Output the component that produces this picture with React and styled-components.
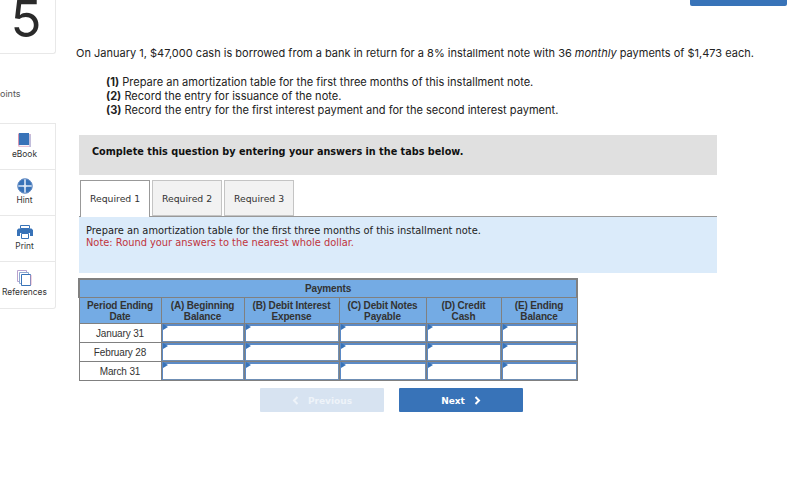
import styled, { createGlobalStyle } from 'styled-components';

const GlobalStyle = createGlobalStyle`
  html, body {
    margin: 0;
    padding: 0;
    background: #fff;
  }
`;

const Page = styled.div`
  display: flex;
  width: 802px;
  height: 500px;
  overflow: hidden;
  font-family: "Inter", sans-serif;
  color: #222;
`;

const Sidebar = styled.aside`
  width: 56px;
  flex: none;
`;

const NumberBox = styled.div`
  height: 54px;
  box-sizing: border-box;
  border-right: 1px solid #e8e8e8;
  border-bottom: 1px solid #e8e8e8;
  border-bottom-right-radius: 3px;
  display: flex;
  justify-content: center;
  padding-right: 3px;
  font-size: 51px;
  line-height: 38px;
  font-weight: 400;
  color: #2a2a2a;
`;

const Points = styled.div`
  margin-top: 33px;
  font-size: 9px;
  line-height: 14px;
  color: #555;
`;

const ToolCard = styled.div`
  margin-top: 22px;
  box-sizing: border-box;
  border: 1px solid #e8e8e8;
  border-left: 0;
  border-bottom-right-radius: 3px;
`;

const Tool = styled.div`
  height: 46px;
  box-sizing: border-box;
  border-bottom: ${(p) => (p.$last ? '0' : '1px solid #e8e8e8')};
  display: flex;
  flex-direction: column;
  align-items: center;
  padding: 8px 6px 0 0;
  gap: 1px;
  font-size: 8.4px;
  line-height: 11px;
  color: #333;
`;

const IconSlot = styled.div`
  height: 16px;
  display: flex;
  align-items: center;
`;

const Main = styled.main`
  flex: 1;
  padding-left: 20px;
  padding-right: 15px;
`;

const TopBar = styled.div`
  display: flex;
  justify-content: flex-end;
  height: 6px;
`;

const TopButton = styled.div`
  width: 97px;
  height: 6px;
  background: #3873b8;
  border-radius: 0 0 2px 2px;
`;

const Question = styled.p`
  margin: 40px 0 0;
  font-size: 11px;
  line-height: 15px;
  white-space: nowrap;
`;

const Steps = styled.ol`
  list-style: none;
  margin: 14px 0 0;
  padding: 0 0 0 30px;
  font-size: 11.05px;
  line-height: 14px;
`;

const Panels = styled.div`
  margin-left: 3px;
  width: 638px;
`;

const Banner = styled.div`
  margin-top: 18px;
  height: 40px;
  background: #e0e0e0;
  box-sizing: border-box;
  padding: 10px 13px;
  font-family: "DejaVu Sans", sans-serif;
  font-size: 9.7px;
  line-height: 13px;
  font-weight: 700;
  color: #111;
`;

const Tabs = styled.div`
  display: flex;
  gap: 2px;
  margin-top: 5px;
  padding-left: 1px;
  border-bottom: 1px solid #999;
`;

const Tab = styled.div`
  width: 70px;
  box-sizing: border-box;
  margin-bottom: ${(p) => (p.$active ? '-1px' : '0')};
  height: ${(p) => (p.$active ? '37px' : '36px')};
  border: 1px solid ${(p) => (p.$active ? '#999' : '#c4c4c4')};
  border-bottom: ${(p) => (p.$active ? '0' : '1px solid #c4c4c4')};
  padding-bottom: ${(p) => (p.$active ? '2px' : '0')};
  background: ${(p) => (p.$active ? '#fff' : '#f2f2f2')};
  display: flex;
  align-items: center;
  justify-content: center;
  font-family: "DejaVu Sans", sans-serif;
  font-size: 9.3px;
  color: #333;
`;

const Instructions = styled.div`
  height: 56px;
  box-sizing: border-box;
  background: #dbebfa;
  padding: 8px 7px;
  font-family: "DejaVu Sans", sans-serif;
  font-size: 9.85px;
  line-height: 12px;
  color: #222;
`;

const Note = styled.div`
  color: #c0343c;
`;

const Table = styled.table`
  margin: 5px 0 0 -1px;
  width: 498px;
  table-layout: fixed;
  border-collapse: collapse;
  font-family: "Liberation Sans", sans-serif;
  font-size: 10px;
  letter-spacing: -0.15px;
  line-height: 11px;
`;

const HeadCell = styled.th`
  background: #74abe4;
  border: 1px solid #808080;
  border-width: ${(p) => (p.$top ? '2px 2px 1px' : '1px')};
  height: ${(p) => (p.$top ? '16px' : '25px')};
  padding: ${(p) => (p.$top ? '0 0 1px' : '0')};
  font-weight: 700;
  color: #333;
`;

const DateCell = styled.td`
  border: 1px solid #808080;
  height: 18px;
  padding: 0;
  text-align: center;
  color: #333;
  background: #fff;
`;

const InputCell = styled.td`
  position: relative;
  border: 1px solid #808080;
  height: 18px;
  padding: 0;
  background: #fff;
  box-shadow: inset 1px 2px 0 #5b8ac6, inset -1px -1px 0 #6f8fb5;

  &::before {
    content: '';
    position: absolute;
    left: 1px;
    top: 0;
    border-top: 3px solid transparent;
    border-bottom: 3px solid transparent;
    border-left: 5px solid #3873b8;
  }
`;

const Pager = styled.div`
  display: flex;
  gap: 15px;
  margin-top: 7px;
  padding-left: 181px;
`;

const PagerButton = styled.div`
  width: 124px;
  height: 24px;
  box-sizing: border-box;
  padding-top: 1px;
  border-radius: 1px;
  background: ${(p) => (p.$disabled ? '#d7e3f1' : '#3873b8')};
  color: ${(p) => (p.$disabled ? '#eef3f9' : '#fff')};
  display: flex;
  align-items: center;
  justify-content: center;
  gap: 9px;
  font-family: "DejaVu Sans", sans-serif;
  font-size: 9px;
  font-weight: 700;
`;

const Chevron = ({ left }) => (
  <svg width="7" height="9" viewBox="0 0 7 9" fill="none" stroke="currentColor" strokeWidth="2">
    <path d={left ? 'M5.5 1L2 4.5 5.5 8' : 'M1.5 1L5 4.5 1.5 8'} />
  </svg>
);

const BookIcon = () => (
  <svg width="15" height="15" viewBox="0 0 15 15">
    <path d="M1 1.5C1 .8 1.6 0 2.5 0H3v12H2.5C1.6 12 1 12.6 1 13.5z" fill="#d795b0" />
    <path d="M2 0h10v12H2z" fill="#3873b8" />
    <path d="M12 1h2v13H3c-1 0-2-.4-2-1.2C1 12.2 2 12 3 12h9z" fill="#e6b6cb" />
    <path d="M2.5 12.7H12.5" stroke="#fff" strokeWidth="1" />
    <path d="M13 1.5V14" stroke="#9dc4ec" strokeWidth="1" />
  </svg>
);

const HintIcon = () => (
  <svg width="16" height="16" viewBox="0 0 16 16">
    <circle cx="8" cy="8" r="7.5" fill="#3873b8" />
    <path d="M7.2.5h1.6v15H7.2zM.5 7.2h15v1.6H.5z" fill="#dce8f5" />
    <circle cx="8" cy="8" r="1.6" fill="#dce8f5" />
    <circle cx="8" cy="8" r="7.2" fill="none" stroke="#6f93c8" strokeWidth="1" />
  </svg>
);

const PrintIcon = () => (
  <svg width="16" height="14" viewBox="0 0 16 14">
    <path d="M3.5.5h9v3h-9z" fill="#fff" stroke="#3873b8" />
    <path d="M1.5 3.5h13L16 5v6h-3V8H3v3H0V5z" fill="#3873b8" />
    <path d="M4.5 8.5h7v5h-7z" fill="#fff" stroke="#3873b8" />
  </svg>
);

const RefsIcon = () => (
  <svg width="15" height="16" viewBox="0 0 15 16" fill="#fff" strokeWidth="1">
    <path d="M.5.5h9v11h-9z" stroke="#b9a3cf" />
    <path d="M2.5 2.5h9v11h-9z" stroke="#8fa8cf" />
    <path d="M4.5 4.5h9v11h-9z" stroke="#3873b8" />
    <path d="M14 5v10" stroke="#e4a9c4" />
  </svg>
);

const tools = [
  { label: 'eBook', Icon: BookIcon },
  { label: 'Hint', Icon: HintIcon },
  { label: 'Print', Icon: PrintIcon },
  { label: 'References', Icon: RefsIcon },
];

const columns = [
  ['Period Ending', 'Date', 82],
  ['(A) Beginning', 'Balance', 83],
  ['(B) Debit Interest', 'Expense', 95],
  ['(C) Debit Notes', 'Payable', 87],
  ['(D) Credit', 'Cash', 75],
  ['(E) Ending', 'Balance', 76],
];

const rows = ['January 31', 'February 28', 'March 31'];

const App = () => (
  <Page>
    <GlobalStyle />
    <Sidebar>
      <NumberBox>5</NumberBox>
      <Points>oints</Points>
      <ToolCard>
        {tools.map(({ label, Icon }, i) => (
          <Tool key={label} $last={i === tools.length - 1}>
            <IconSlot>
              <Icon />
            </IconSlot>
            {label}
          </Tool>
        ))}
      </ToolCard>
    </Sidebar>
    <Main>
      <TopBar>
        <TopButton />
      </TopBar>
      <Question>
        On January 1, $47,000 cash is borrowed from a bank in return for a 8% installment note with 36 <em>monthly</em> payments of $1,473 each.
      </Question>
      <Steps>
        <li><b>(1)</b> Prepare an amortization table for the first three months of this installment note.</li>
        <li><b>(2)</b> Record the entry for issuance of the note.</li>
        <li><b>(3)</b> Record the entry for the first interest payment and for the second interest payment.</li>
      </Steps>
      <Panels>
        <Banner>Complete this question by entering your answers in the tabs below.</Banner>
        <Tabs>
          <Tab $active>Required 1</Tab>
          <Tab>Required 2</Tab>
          <Tab>Required 3</Tab>
        </Tabs>
        <Instructions>
          Prepare an amortization table for the first three months of this installment note.
          <Note>Note: Round your answers to the nearest whole dollar.</Note>
        </Instructions>
        <Table>
          <colgroup>
            {columns.map(([a, , w]) => (
              <col key={a} width={w} />
            ))}
          </colgroup>
          <thead>
            <tr>
              <HeadCell $top colSpan={6}>Payments</HeadCell>
            </tr>
            <tr>
              {columns.map(([a, b]) => (
                <HeadCell key={a}>
                  {a}
                  <br />
                  {b}
                </HeadCell>
              ))}
            </tr>
          </thead>
          <tbody>
            {rows.map((row) => (
              <tr key={row}>
                <DateCell>{row}</DateCell>
                {columns.slice(1).map(([a]) => (
                  <InputCell key={a} />
                ))}
              </tr>
            ))}
          </tbody>
        </Table>
        <Pager>
          <PagerButton $disabled>
            <Chevron left />
            Previous
          </PagerButton>
          <PagerButton>
            Next
            <Chevron />
          </PagerButton>
        </Pager>
      </Panels>
    </Main>
  </Page>
);

export default App;
